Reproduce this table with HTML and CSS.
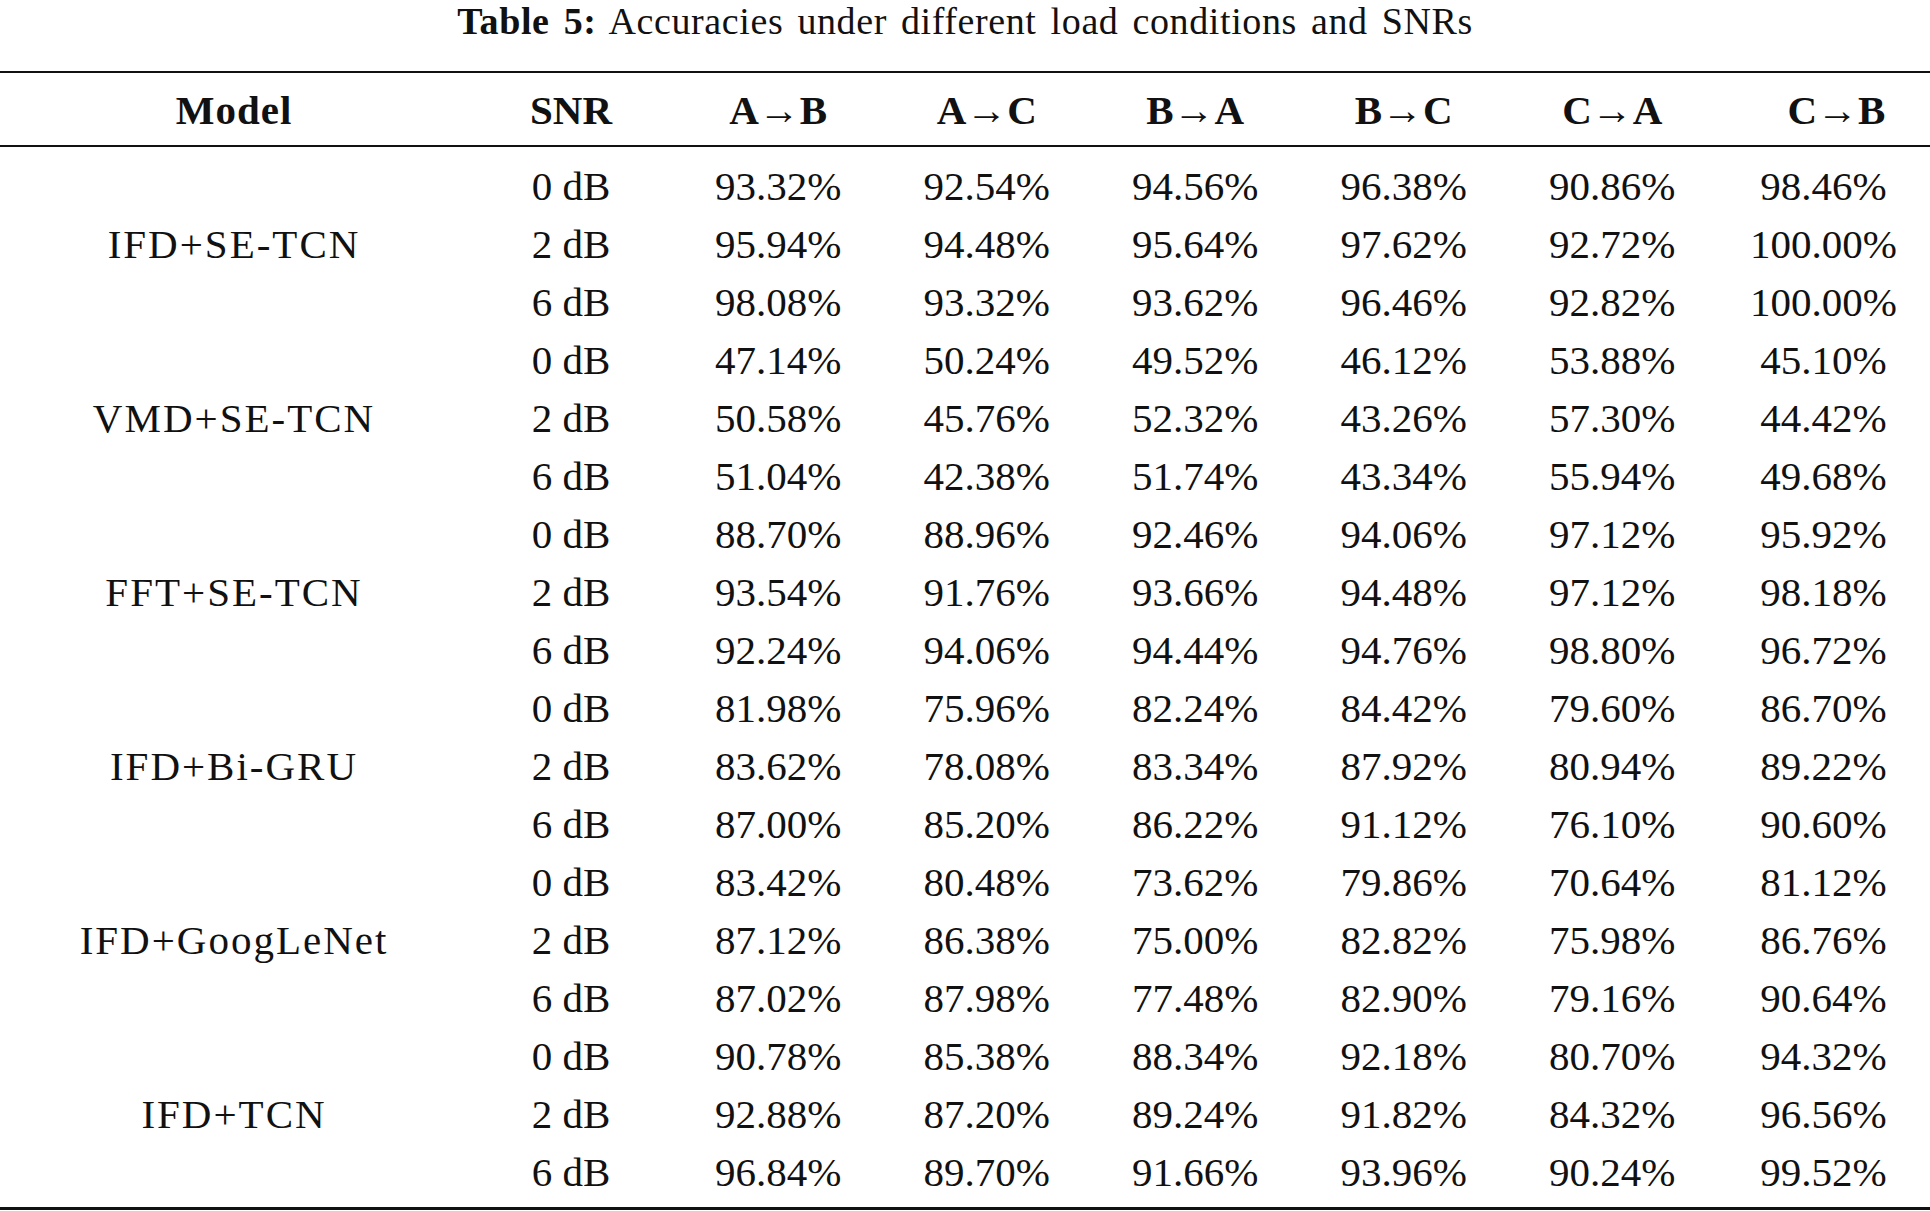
FILE: index.html
```html
<!DOCTYPE html>
<html lang="en">
<head>
<meta charset="utf-8">
<title>Table 5</title>
<link rel="stylesheet" href="styles.css">
</head>
<body>
<div class="title"><b>Table 5:</b> Accuracies under different load conditions and SNRs</div>
<div class="wrap">
<table class="acc">
<colgroup>
<col class="c-model"><col class="c-snr"><col class="c-n"><col class="c-n"><col class="c-n"><col class="c-n"><col class="c-n"><col class="c-last">
</colgroup>
<thead>
<tr><th class="h-model">Model</th><th>SNR</th><th>A→B</th><th>A→C</th><th>B→A</th><th>B→C</th><th>C→A</th><th class="h-last">C→B</th></tr>
</thead>
<tbody>
<tr class="first"><td rowspan="3" class="model">IFD+SE-TCN</td><td>0 dB</td><td>93.32%</td><td>92.54%</td><td>94.56%</td><td>96.38%</td><td>90.86%</td><td>98.46%</td></tr>
<tr><td>2 dB</td><td>95.94%</td><td>94.48%</td><td>95.64%</td><td>97.62%</td><td>92.72%</td><td>100.00%</td></tr>
<tr><td>6 dB</td><td>98.08%</td><td>93.32%</td><td>93.62%</td><td>96.46%</td><td>92.82%</td><td>100.00%</td></tr>
<tr><td rowspan="3" class="model">VMD+SE-TCN</td><td>0 dB</td><td>47.14%</td><td>50.24%</td><td>49.52%</td><td>46.12%</td><td>53.88%</td><td>45.10%</td></tr>
<tr><td>2 dB</td><td>50.58%</td><td>45.76%</td><td>52.32%</td><td>43.26%</td><td>57.30%</td><td>44.42%</td></tr>
<tr><td>6 dB</td><td>51.04%</td><td>42.38%</td><td>51.74%</td><td>43.34%</td><td>55.94%</td><td>49.68%</td></tr>
<tr><td rowspan="3" class="model">FFT+SE-TCN</td><td>0 dB</td><td>88.70%</td><td>88.96%</td><td>92.46%</td><td>94.06%</td><td>97.12%</td><td>95.92%</td></tr>
<tr><td>2 dB</td><td>93.54%</td><td>91.76%</td><td>93.66%</td><td>94.48%</td><td>97.12%</td><td>98.18%</td></tr>
<tr><td>6 dB</td><td>92.24%</td><td>94.06%</td><td>94.44%</td><td>94.76%</td><td>98.80%</td><td>96.72%</td></tr>
<tr><td rowspan="3" class="model">IFD+Bi-GRU</td><td>0 dB</td><td>81.98%</td><td>75.96%</td><td>82.24%</td><td>84.42%</td><td>79.60%</td><td>86.70%</td></tr>
<tr><td>2 dB</td><td>83.62%</td><td>78.08%</td><td>83.34%</td><td>87.92%</td><td>80.94%</td><td>89.22%</td></tr>
<tr><td>6 dB</td><td>87.00%</td><td>85.20%</td><td>86.22%</td><td>91.12%</td><td>76.10%</td><td>90.60%</td></tr>
<tr><td rowspan="3" class="model">IFD+GoogLeNet</td><td>0 dB</td><td>83.42%</td><td>80.48%</td><td>73.62%</td><td>79.86%</td><td>70.64%</td><td>81.12%</td></tr>
<tr><td>2 dB</td><td>87.12%</td><td>86.38%</td><td>75.00%</td><td>82.82%</td><td>75.98%</td><td>86.76%</td></tr>
<tr><td>6 dB</td><td>87.02%</td><td>87.98%</td><td>77.48%</td><td>82.90%</td><td>79.16%</td><td>90.64%</td></tr>
<tr><td rowspan="3" class="model last-model">IFD+TCN</td><td>0 dB</td><td>90.78%</td><td>85.38%</td><td>88.34%</td><td>92.18%</td><td>80.70%</td><td>94.32%</td></tr>
<tr><td>2 dB</td><td>92.88%</td><td>87.20%</td><td>89.24%</td><td>91.82%</td><td>84.32%</td><td>96.56%</td></tr>
<tr class="last"><td>6 dB</td><td>96.84%</td><td>89.70%</td><td>91.66%</td><td>93.96%</td><td>90.24%</td><td>99.52%</td></tr>
</tbody>
</table>
</div>
</body>
</html>
```
FILE: styles.css
```css
html, body {
  margin: 0;
  padding: 0;
  background: #ffffff;
}

body {
  width: 1930px;
  font-family: "Liberation Serif", "Times New Roman", serif;
  color: #111111;
}

.title {
  text-align: center;
  font-size: 38px;
  line-height: 42px;
  letter-spacing: 0.6px;
  word-spacing: 4px;
  margin-bottom: 29px;
}

.title b {
  font-weight: bold;
}

.wrap {
  border-bottom: 3px solid #111111;
}

.acc {
  width: 1930px;
  table-layout: fixed;
  border-collapse: separate;
  border-spacing: 0;
  font-size: 41px;
}

.c-model { width: 468px; }
.c-snr { width: 206px; }
.c-n { width: 208.5px; }
.c-last { width: 214px; }

.acc th {
  font-weight: bold;
  text-align: center;
  border-top: 2px solid #111111;
  border-bottom: 2px solid #111111;
  padding: 3px 0 0 0;
  line-height: 69px;
  white-space: nowrap;
}

.acc th.h-model {
  letter-spacing: 1px;
}

.acc th.h-last {
  padding-left: 26px;
}

.acc td {
  text-align: center;
  padding: 0;
  line-height: 58px;
  white-space: nowrap;
  vertical-align: middle;
}

.acc td.model {
  letter-spacing: 2px;
}

.acc tr.first td {
  padding-top: 10px;
}

.acc tr.last td,
.acc td.last-model {
  padding-bottom: 6px;
}
```
